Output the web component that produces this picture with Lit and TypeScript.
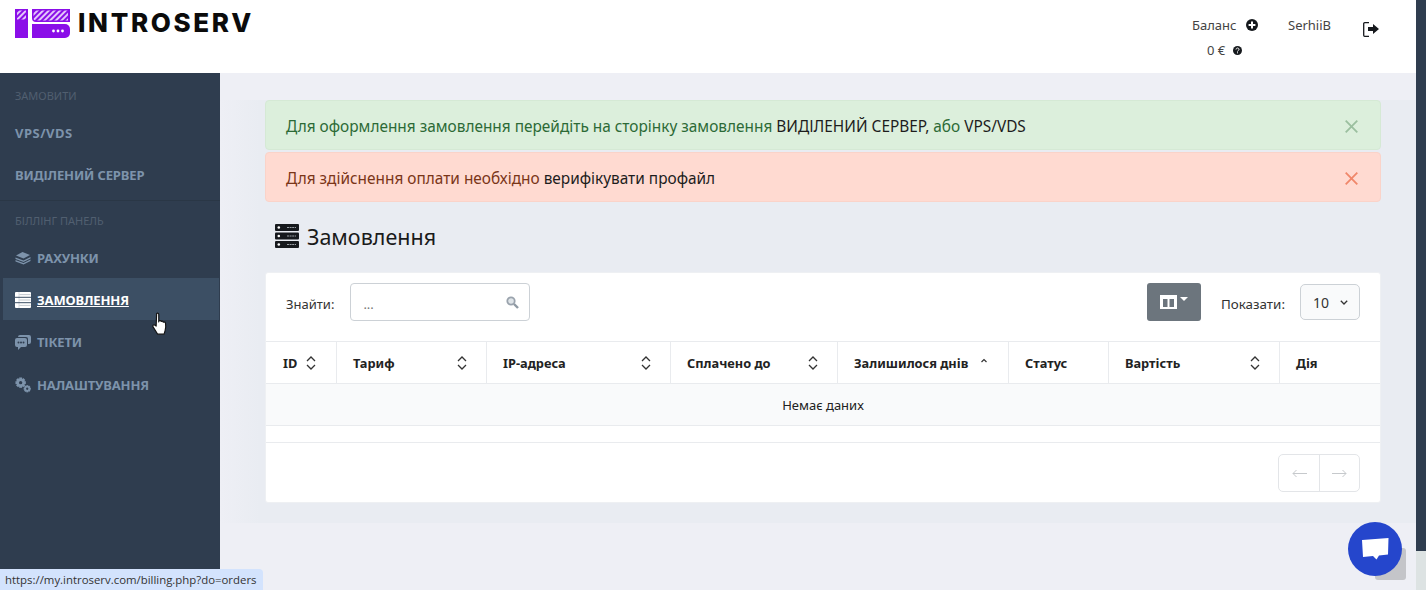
import { LitElement, html, css, svg } from "lit";
import { customElement } from "lit/decorators.js";

const sort = svg`<svg class="sort" width="10" height="14" viewBox="0 0 10 14" fill="none" stroke="#333" stroke-width="1.3"><path d="M1 5l4-4 4 4M1 9l4 4 4-4"/></svg>`;
const sortUp = svg`<svg class="sort" width="10" height="14" viewBox="0 0 10 14" fill="none" stroke="#333" stroke-width="1.2"><path d="M2.5 6l2.5-2.5L7.500 6"/></svg>`;

const logo = svg`<svg width="56" height="30" viewBox="0 0 56 30">
  <defs><pattern id="st" width="4" height="4" patternUnits="userSpaceOnUse" patternTransform="rotate(45)"><rect width="4" height="4" fill="#8a0ee8"/><rect width="2" height="4" fill="#e3c6fa"/></pattern></defs>
  <rect x="0" y="0" width="13" height="29" fill="#8a0ee8"/>
  <rect x="2" y="1.500" width="9" height="9" fill="url(#st)"/>
  <path d="M17 0h38v13H21a4 4 0 0 1-4-4z" fill="#8a0ee8"/>
  <path d="M21 1.500h32v10H21a2.500 2.500 0 0 1-2.500-2.500V4a2.500 2.500 0 0 1 2.500-2.500z" fill="url(#st)"/>
  <path d="M17 15h33a5 5 0 0 1 5 5v4a5 5 0 0 1-5 5H17z" fill="#8a0ee8"/>
  <circle cx="38.500" cy="22" r="1.400" fill="#fff"/><circle cx="43" cy="22" r="1.400" fill="#fff"/><circle cx="47.500" cy="22" r="1.400" fill="#fff"/>
</svg>`;

const moneyIcon = svg`<svg width="16" height="14" viewBox="0 0 16 14" fill="#7d93ab"><path d="M1 4.500 7.500 1 15 4 8.500 7.500z"/><path d="M.5 6.500 8.500 9.500 15.500 6v1.500L8.500 11 .5 8z"/><path d="M.5 9 8.500 12 15.500 8.500V10L8.500 13.500.5 10.500z"/></svg>`;
const listIcon = svg`<svg width="16" height="16" viewBox="0 0 16 16"><rect width="16" height="16" rx="1" fill="#fff"/><path d="M0 5.300h16M0 10.700h16" stroke="#3c4f64" stroke-width="1"/><path d="M4.500 2.600h11M4.500 8h11M4.500 13.400h11" stroke="#3c4f64" stroke-width=".6" opacity=".5"/><path d="M4 0v16" stroke="#3c4f64" stroke-width=".5" opacity=".4"/></svg>`;
const commentsIcon = svg`<svg width="16" height="15" viewBox="0 0 16 15" fill="#7d93ab"><path d="M5 0h9a2 2 0 0 1 2 2v5a2 2 0 0 1-2 2h-1V4a2 2 0 0 0-2-2H3a2 2 0 0 1 2-2z"/><path d="M2 3h8a2 2 0 0 1 2 2v5a2 2 0 0 1-2 2H6l-3 3v-3H2a2 2 0 0 1-2-2V5a2 2 0 0 1 2-2z"/><g fill="#2f3d4f"><circle cx="3.500" cy="7.500" r="1"/><circle cx="6" cy="7.500" r="1"/><circle cx="8.500" cy="7.500" r="1"/></g></svg>`;
const gear = (cx: number, cy: number, r: number) => {
  const teeth = [0, 45, 90, 135].map(a => svg`<rect x=${cx - r * 0.28} y=${cy - r} width=${r * 0.56} height=${r * 2} transform="rotate(${a} ${cx} ${cy})"/>`);
  return svg`${teeth}<circle cx=${cx} cy=${cy} r=${r * 0.75}/><circle cx=${cx} cy=${cy} r=${r * 0.32} fill="#2f3d4f"/>`;
};
const cogsIcon = svg`<svg width="16" height="16" viewBox="0 0 17 17" fill="#7d93ab">${gear(6, 6, 5.500)}${gear(13, 12.500, 3.800)}</svg>`;
const serverTitle = svg`<svg width="24" height="24" viewBox="0 0 24 24"><g fill="#16191d"><rect width="24" height="7" rx="1"/><rect y="8.500" width="24" height="7" rx="1"/><rect y="17" width="24" height="7" rx="1"/></g><g fill="#fff"><circle cx="3.800" cy="3.500" r="1.300"/><circle cx="3.800" cy="12" r="1.300"/><circle cx="3.800" cy="20.500" r="1.300"/></g><path d="M12 3.500h9M12 12h9M12 20.500h9" stroke="#9aa0a6" stroke-width="1" stroke-dasharray="2 .6"/></svg>`;
const plusCircle = svg`<svg width="12" height="12" viewBox="0 0 12 12"><circle cx="6" cy="6" r="6" fill="#16191d"/><path d="M6 2.600v6.800M2.600 6h6.800" stroke="#fff" stroke-width="2"/></svg>`;
const helpCircle = svg`<svg width="9" height="9" viewBox="0 0 9 9"><circle cx="4.500" cy="4.500" r="4.500" fill="#16191d"/><path d="M3 3.500c0-2 3-2 3 0 0 1-1.500 1-1.500 2" stroke="#fff" stroke-width="1" fill="none"/><rect x="4" y="6.300" width="1" height="1" fill="#fff"/></svg>`;
const logout = svg`<svg width="17" height="15" viewBox="0 0 17 15"><path d="M6 .7H1.700a1 1 0 0 0-1 1v11.600a1 1 0 0 0 1 1H6" fill="none" stroke="#16191d" stroke-width="1.300"/><path d="M5 5.500h5V2.500l6 5-6 5V9.500H5z" fill="#16191d" transform="translate(0 -.5)"/></svg>`;
const searchIcon = svg`<svg width="13" height="13" viewBox="0 0 13 13"><circle cx="5" cy="5" r="3.700" fill="#dfe4e8" stroke="#9aa3ad" stroke-width="1.800"/><path d="M8 8l4 4" stroke="#8f99a3" stroke-width="2.400"/></svg>`;
const columnsIcon = svg`<svg width="17" height="14" viewBox="0 0 17 14"><rect width="17" height="14" fill="#fff"/><rect x="3" y="4" width="4.500" height="8" fill="#6c757d"/><rect x="9.500" y="4" width="4.500" height="8" fill="#6c757d"/></svg>`;
const hand = svg`<svg width="18" height="25" viewBox="0 0 16 24"><g transform="translate(.3 0)"><path d="M4.500 1.500c1-.8 2-.3 2 1v7l.3-1c1-.6 1.900-.3 2 .6.900-.6 1.900-.3 2 .7.900-.5 2-.1 2.200 1 .3 2 .3 5-.4 7l-1 3.500H5.500L1.500 15c-.8-1-.9-2-.2-2.500.7-.5 1.600-.1 2.700 1z" fill="#fff" stroke="#111" stroke-width="1.100" stroke-linejoin="round"/></g></svg>`;
const bubble = svg`<svg width="27" height="23" viewBox="0 0 27 23"><path d="M0 2 26.500 0 26 16.500 17 17.500 14.500 21.500 11 18 1 19z" fill="#fff"/></svg>`;
const arrowL = svg`<svg width="15" height="9" viewBox="0 0 15 9" fill="none" stroke="#c6c9cc" stroke-width="1"><path d="M15 4.500H1M4.500 1 1 4.500 4.500 8"/></svg>`;
const arrowR = svg`<svg width="15" height="9" viewBox="0 0 15 9" fill="none" stroke="#c6c9cc" stroke-width="1"><path d="M0 4.500h14M10.500 1 14 4.500 10.500 8"/></svg>`;
const closeX = (c: string) => svg`<svg width="13" height="13" viewBox="0 0 13 13" stroke=${c} stroke-width="1.800"><path d="M.7.7l11.600 11.600M12.300.7.700 12.300"/></svg>`;
const chevron = svg`<svg width="8" height="5" viewBox="0 0 8 5" fill="none" stroke="#333" stroke-width="1.300"><path d="M.8.800 4 4 7.200.8"/></svg>`;

@customElement("app-root")
export class AppRoot extends LitElement {
  static styles = css`
    :host { display: block; position: relative; width: 1426px; height: 590px; overflow: hidden; background: #eeeff5; font-family: "Noto Sans", sans-serif; color: #333; }
    svg { display: block; flex: none; }
    .top { height: 73px; width: 1416px; background: #fff; display: flex; }
    .brand { display: flex; align-items: flex-start; gap: 7px; padding: 9px 0 0 15px; }
    .brand-name { font-family: Inter, sans-serif; font-weight: 800; font-size: 26px; line-height: 27px; color: #0b0b0b; letter-spacing: 2.65px; }
    .user { margin-left: auto; display: flex; font-size: 13px; color: #444; }
    .balance { width: 66px; margin-right: 30px; padding-top: 16px; }
    .line { display: flex; align-items: center; gap: 10px; height: 18px; white-space: nowrap; }
    .line + .line { margin-top: 7px; gap: 8px; padding-left: 15px; }
    .name { padding-top: 16px; width: 75px; line-height: 18px; }
    .out { padding: 22px 36px 0 0; }
    .layout { display: flex; height: 517px; width: 1416px; }
    .side { width: 220px; flex: none; background: #2f3d4f; padding-top: 14px; box-sizing: border-box; }
    .label { font-size: 11px; line-height: 18px; color: #515f70; padding-left: 15px; }
    .item { height: 42px; box-sizing: border-box; padding-top: 2px; display: flex; align-items: center; gap: 6px; padding-left: 15px; font-size: 13px; font-weight: 700; letter-spacing: -.15px; color: #7d93ab; white-space: nowrap; }
    .wide { letter-spacing: .5px; }
    .rule { height: 1px; background: #2a3746; margin: 5px 0 11px; }
    .first { margin-top: 6px; }
    .gap { margin-top: 6px; }
    .active { margin: 0 1px 0 3px; padding-left: 12px; background: #3c4f64; color: #fff; text-decoration: underline; }
    .item.tall { margin-top: 1px; }
    .main { flex: 1; min-width: 0; padding-top: 27px; }
    .panel { height: 423px; box-sizing: border-box; padding: 0 35px 0 45px; background: linear-gradient(to right, #eeeff5, #e9ecf2 40px); }
    .alert { height: 50px; box-sizing: border-box; border-radius: 4px; display: flex; align-items: center; justify-content: space-between; padding: 2px 22px 0 20px; font-size: 15.4px; margin-bottom: 2px; color: #1d1d1d; }
    .ok { background: #dcefdc; border: 1px solid #d5e9d5; }
    .ok .t { color: #2c6a36; }
    .bad { background: #ffdad1; border: 1px solid #fad3c9; }
    .bad .t { color: #7a3518; }
    .title { display: flex; align-items: center; gap: 8px; height: 64px; padding: 0 0 4px 10px; font-size: 21.500px; color: #1a1a1a; }
    .card { background: #fff; border-radius: 3px; border: 1px solid #eef0f3; box-sizing: border-box; height: 231px; }
    .filters { height: 58px; display: flex; align-items: center; padding: 0 20px 10px 20px; font-size: 13px; color: #333; }
    .lbl { padding-top: 3px; }
    .search { width: 180px; height: 38px; box-sizing: border-box; border: 1px solid #ccd1d6; border-radius: 4px; margin-left: 16px; display: flex; align-items: center; justify-content: space-between; padding: 0 10px 0 12px; color: #777; }
    .cols { margin-left: auto; width: 54px; height: 38px; background: #6c757d; border-radius: 3px; display: flex; align-items: center; justify-content: center; gap: 3px; }
    .caret { width: 0; height: 0; border: 4px solid transparent; border-top-color: #fff; border-bottom: 0; margin-bottom: 6px; }
    .show { margin-left: 20px; font-size: 13.400px; }
    .size { margin-left: 15px; width: 60px; height: 36px; box-sizing: border-box; border: 1px solid #ccd1d6; border-radius: 5px; background: #f9fafb; display: flex; align-items: center; gap: 11px; padding-left: 12px; font-size: 14px; }
    .row { display: grid; grid-template-columns: 70px 150px 184px 167px 171px 100px 171px 1fr; height: 43px; border-top: 1px solid #e9ebee; border-bottom: 1px solid #e9ebee; box-sizing: border-box; }
    .th { display: flex; align-items: center; justify-content: space-between; padding: 0 19px 0 16px; font-size: 12.800px; font-weight: 700; color: #222; border-left: 1px solid #e9ebee; white-space: nowrap; }
    .th:first-child { border-left: 0; padding: 0 20px 0 17px; }
    .empty { height: 42px; background: #f9fafb; border-bottom: 1px solid #e9ebee; box-sizing: border-box; display: flex; align-items: center; justify-content: center; font-size: 13px; color: #222; }
    .foot { margin-top: 16px; border-top: 1px solid #e9ebee; display: flex; justify-content: flex-end; padding: 11px 20px 0 0; }
    .pager { display: flex; border: 1px solid #e3e5e8; border-radius: 5px; height: 38px; box-sizing: border-box; }
    .pager div { width: 40px; box-sizing: border-box; display: flex; align-items: center; justify-content: center; }
    .pager div + div { border-left: 1px solid #e3e5e8; }
    .bar { position: absolute; right: 0; top: 0; width: 10px; height: 590px; background: #dde3e3; }
    .thumb { height: 551px; background: #2f3d4f; }
    .totop { position: absolute; left: 1375px; top: 548px; width: 31px; height: 32px; background: #c4c5c9; border-radius: 3px; }
    .chat { position: absolute; left: 1348px; top: 522px; width: 54px; height: 54px; border-radius: 50%; background: #2546cc; display: flex; align-items: center; justify-content: center; }
    .status { position: absolute; left: 0; bottom: 0; height: 21px; width: 263px; background: #d3e3fd; border-radius: 0 4px 0 0; font-family: "Open Sans", sans-serif; font-size: 11.400px; line-height: 21px; padding-left: 5px; box-sizing: border-box; color: #333; white-space: nowrap; }
    .cursor { position: absolute; left: 151px; top: 312px; }
  `;

  render() {
    const heads: [string, unknown][] = [
      ["ID", sort], ["Тариф", sort], ["IP-адреса", sort], ["Сплачено до", sort],
      ["Залишилося днів", sortUp], ["Статус", ""], ["Вартість", sort], ["Дія", ""],
    ];
    return html`
      <div class="top">
        <div class="brand">${logo}<div class="brand-name">INTROSERV</div></div>
        <div class="user">
          <div class="balance">
            <div class="line">Баланс ${plusCircle}</div>
            <div class="line">0 € ${helpCircle}</div>
          </div>
          <div class="name">SerhiiB</div>
          <div class="out">${logout}</div>
        </div>
      </div>
      <div class="layout">
        <nav class="side">
          <div class="label">ЗАМОВИТИ</div>
          <div class="item first wide">VPS/VDS</div>
          <div class="item">ВИДІЛЕНИЙ СЕРВЕР</div>
          <div class="rule"></div>
          <div class="label">БІЛЛІНГ ПАНЕЛЬ</div>
          <div class="item gap">${moneyIcon}РАХУНКИ</div>
          <div class="item active">${listIcon}ЗАМОВЛЕННЯ</div>
          <div class="item">${commentsIcon}ТІКЕТИ</div>
          <div class="item tall">${cogsIcon}НАЛАШТУВАННЯ</div>
        </nav>
        <main class="main">
          <div class="panel">
            <div class="alert ok">
              <div><span class="t">Для оформлення замовлення перейдіть на сторінку замовлення</span> ВИДІЛЕНИЙ СЕРВЕР, <span class="t">або</span> VPS/VDS</div>
              ${closeX("#9bbf9f")}
            </div>
            <div class="alert bad">
              <div><span class="t">Для здійснення оплати необхідно</span> верифікувати профайл</div>
              ${closeX("#f0876a")}
            </div>
            <div class="title">${serverTitle}Замовлення</div>
            <section class="card">
              <div class="filters">
                <span class="lbl">Знайти:</span>
                <div class="search"><span class="lbl">...</span>${searchIcon}</div>
                <div class="cols">${columnsIcon}<span class="caret"></span></div>
                <span class="show lbl">Показати:</span>
                <div class="size">10 ${chevron}</div>
              </div>
              <div class="row">
                ${heads.map(([t, i]) => html`<div class="th"><span>${t}</span>${i}</div>`)}
              </div>
              <div class="empty">Немає даних</div>
              <div class="foot">
                <div class="pager"><div>${arrowL}</div><div>${arrowR}</div></div>
              </div>
            </section>
          </div>
        </main>
      </div>
      <div class="bar"><div class="thumb"></div></div>
      <div class="totop"></div>
      <div class="chat">${bubble}</div>
      <div class="cursor">${hand}</div>
      <div class="status">https://my.introserv.com/billing.php?do=orders</div>
    `;
  }
}
